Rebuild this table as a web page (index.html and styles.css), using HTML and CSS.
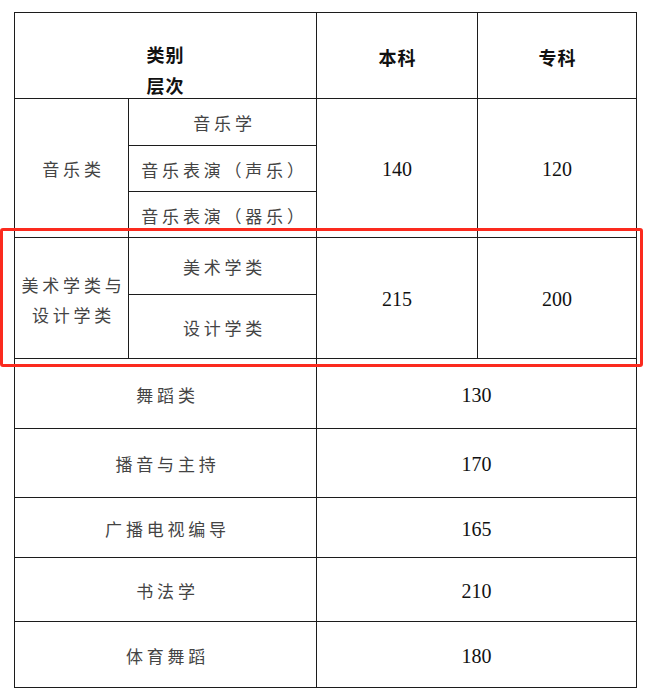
FILE: index.html
```html
<!DOCTYPE html>
<html lang="zh-CN">
<head>
<meta charset="utf-8">
<title>分数线</title>
<link rel="stylesheet" href="styles.css">
</head>
<body>
<div class="page">
  <div class="grid">
    <div class="c cs2 head-left"><span>类别</span><span>层次</span></div>
    <div class="c head">本科</div>
    <div class="c head">专科</div>

    <div class="c rs3 zh">音乐类</div>
    <div class="c zh">音乐学</div>
    <div class="c rs3 num">140</div>
    <div class="c rs3 num">120</div>
    <div class="c zh">音乐表演（声乐）</div>
    <div class="c zh">音乐表演（器乐）</div>

    <div class="c rs2 zh two"><span>美术学类与</span><span>设计学类</span></div>
    <div class="c zh">美术学类</div>
    <div class="c rs2 num">215</div>
    <div class="c rs2 num">200</div>
    <div class="c zh">设计学类</div>

    <div class="c cs2 zh">舞蹈类</div>
    <div class="c cs2 num">130</div>
    <div class="c cs2 zh">播音与主持</div>
    <div class="c cs2 num">170</div>
    <div class="c cs2 zh">广播电视编导</div>
    <div class="c cs2 num">165</div>
    <div class="c cs2 zh">书法学</div>
    <div class="c cs2 num">210</div>
    <div class="c cs2 zh">体育舞蹈</div>
    <div class="c cs2 num">180</div>
  </div>
  <div class="highlight"></div>
</div>
</body>
</html>
```

FILE: styles.css
```css
html, body {
  margin: 0;
  padding: 0;
  background: #ffffff;
}

.page {
  position: relative;
  width: 646px;
  height: 694px;
  padding: 12px 0 0 14px;
  box-sizing: border-box;
}

.grid {
  display: grid;
  width: 623px;
  box-sizing: border-box;
  padding: 1px;
  gap: 1px;
  background: #1c1c1c;
  grid-template-columns: 113px 187px 160px 158px;
  grid-template-rows: 85px 46px 45px 45px 56px 63px 69px 68px 59px 63px 65px;
}

.c {
  background: #ffffff;
  display: flex;
  align-items: center;
  justify-content: center;
  text-align: center;
  box-sizing: border-box;
}

.cs2 { grid-column: span 2; }
.rs2 { grid-row: span 2; }
.rs3 { grid-row: span 3; }

.zh {
  font-family: "Noto Sans CJK SC", "Noto Sans", sans-serif;
  font-weight: 400;
  font-size: 17px;
  letter-spacing: 3.8px;
  padding-left: 4px;
  padding-top: 1px;
  color: #444444;
}

.two {
  flex-direction: column;
  line-height: 30px;
  padding-top: 4px;
}

.num {
  font-family: "Liberation Serif", "Times New Roman", serif;
  font-size: 20px;
  padding-top: 3px;
  color: #111111;
}

.head {
  font-family: "Noto Sans CJK SC", "Noto Sans", sans-serif;
  font-weight: 700;
  font-size: 18px;
  letter-spacing: 1px;
  padding-left: 1px;
  padding-top: 2px;
  color: #111111;
}

.head-left {
  flex-direction: column;
  justify-content: flex-start;
  padding-top: 26px;
  font-family: "Noto Sans CJK SC", "Noto Sans", sans-serif;
  font-weight: 700;
  font-size: 18px;
  letter-spacing: 1px;
  line-height: 31px;
  color: #111111;
}

.highlight {
  position: absolute;
  left: 0;
  top: 228px;
  width: 643px;
  height: 139px;
  box-sizing: border-box;
  border: 3px solid #fb2a1e;
  border-radius: 3px;
}
```
